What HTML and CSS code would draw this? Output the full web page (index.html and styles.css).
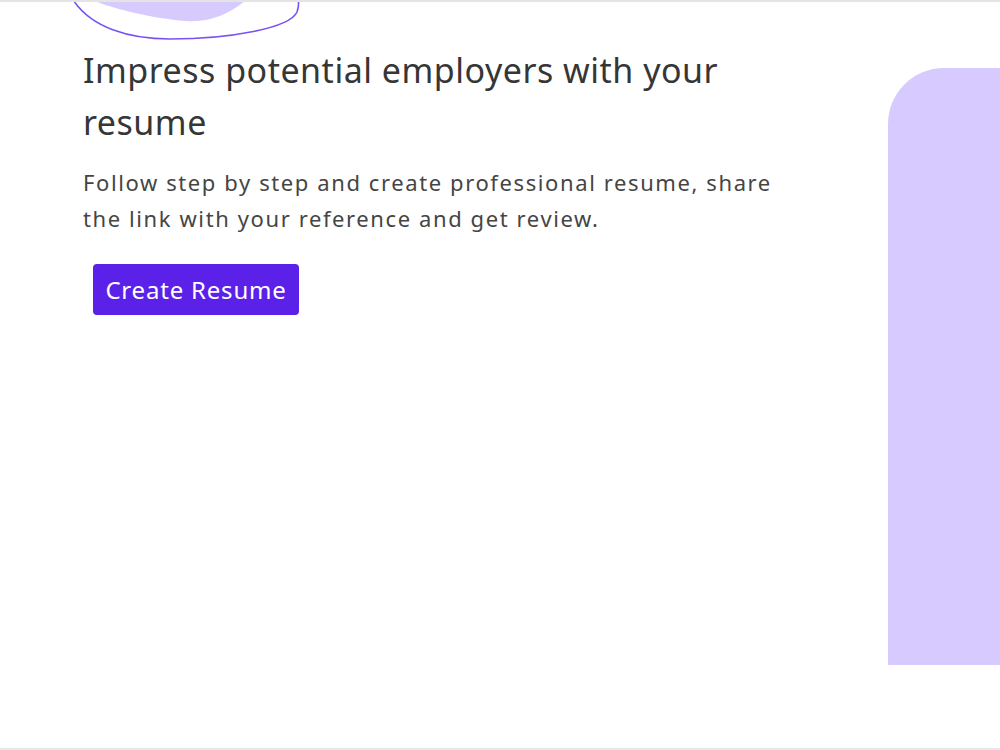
FILE: index.html
```html
<!DOCTYPE html>
<html lang="en">
<head>
<meta charset="utf-8">
<title>Resume</title>
<link rel="stylesheet" href="styles.css">
</head>
<body>
<div class="page">
  <svg class="blob" width="320" height="45" viewBox="0 0 320 45" aria-hidden="true">
    <path d="M93 0 C110 8 150 18 185 21 C212 23 232 12 246 0 Z" fill="#d6cafe"/>
    <path d="M72 -2 C90 28 130 39 170 39 C230 39 290 28 297 12 C299 6 299 2 298 -2" fill="none" stroke="#7a52f2" stroke-width="1.6"/>
  </svg>
  <main class="hero">
    <section class="intro">
      <h1 class="title">Impress potential employers with your resume</h1>
      <p class="lead">Follow step by step and create professional resume, share the link with your reference and get review.</p>
      <button class="cta" type="button">Create Resume</button>
    </section>
    <aside class="panel"></aside>
  </main>
</div>
</body>
</html>
```
FILE: styles.css
```css
html, body {
  margin: 0;
  padding: 0;
  background: #ffffff;
}
.page {
  position: relative;
  width: 1000px;
  height: 750px;
  border-top: 2px solid #e4e4e4;
  border-bottom: 2px solid #e8e8e8;
  box-sizing: border-box;
  overflow: hidden;
  font-family: "Noto Sans", "Open Sans", sans-serif;
}
.blob {
  position: absolute;
  left: 0;
  top: -2px;
}
.hero {
  display: flex;
  align-items: flex-start;
}
.intro {
  flex: 1;
  padding: 42px 0 0 83px;
}
.title {
  margin: 0;
  width: 700px;
  font-size: 34px;
  font-weight: 400;
  line-height: 52px;
  letter-spacing: 0.5px;
  color: #363636;
}
.lead {
  margin: 16px 0 0;
  width: 720px;
  font-size: 22px;
  line-height: 36px;
  letter-spacing: 1.6px;
  color: #454545;
}
.cta {
  margin: 28px 0 0 10px;
  width: 206px;
  height: 51px;
  border: none;
  border-radius: 4px;
  background: #5b21e8;
  color: #ffffff;
  font-family: inherit;
  font-size: 24px;
  letter-spacing: 0.8px;
  padding: 0;
}
.panel {
  width: 112px;
  height: 597px;
  margin-top: 66px;
  background: #d6cafe;
  border-top-left-radius: 56px;
}
```
